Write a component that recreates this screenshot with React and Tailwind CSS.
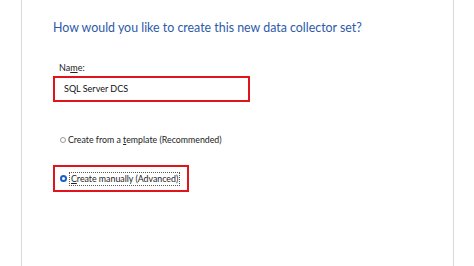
import React from "react";

export default function App() {
  return (
    <div
      className="w-[474px] h-[266px] bg-white overflow-hidden"
      style={{ fontFamily: "Lato, 'Noto Sans', sans-serif" }}
    >
      <div className="ml-[21px] w-[433px] h-full border-x border-[#d9d9d9] pl-[31px] pt-[18px]">
        <h1 className="text-[12.4px] leading-[20px] text-[#2d5aa8]">
          How would you like to create this new data collector set?
        </h1>

        <div className="mt-[24px] pl-[6px] text-[9px] leading-[12px] text-[#222]">
          Na<span className="underline">m</span>e:
        </div>
        <div className="mt-[2px] w-[197px] h-[26px] border-2 border-[#e0141b] flex items-center pl-[9px] text-[9px] text-[#111]">
          SQL Server DCS
        </div>

        <div className="mt-[31px] flex items-center pl-[7px] text-[8.8px] text-[#222]">
          <span className="w-[6px] h-[6px] rounded-full border border-[#9a9a9a] bg-white" />
          <span className="ml-[2px]">
            Create from a <span className="underline">t</span>emplate (Recommended)
          </span>
        </div>

        <div className="mt-[19px] w-[136px] h-[27px] border-2 border-[#e0141b] flex items-center pl-[5px] text-[8.8px] text-[#222]">
          <span className="w-[7px] h-[7px] rounded-full border-2 border-[#1a5fc8] bg-white shrink-0" />
          <span className="ml-[2px] px-[1px] border border-dotted border-[#555] leading-[12px]">
            <span className="underline">C</span>reate manually (Advanced)
          </span>
        </div>
      </div>
    </div>
  );
}
